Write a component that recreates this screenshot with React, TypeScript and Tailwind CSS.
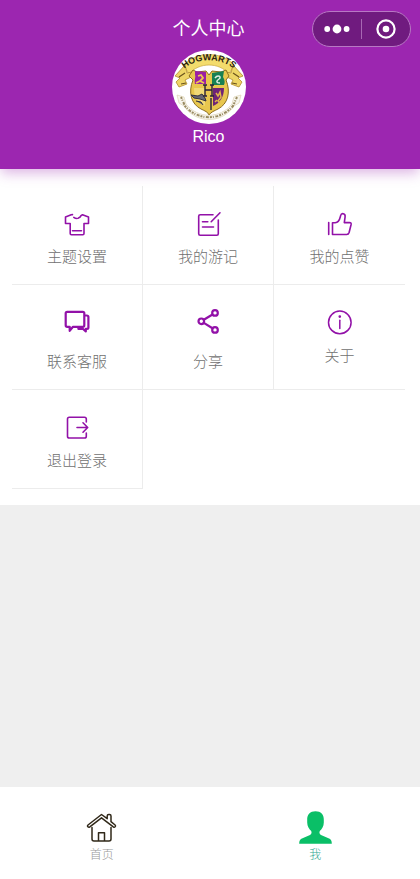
import type { ReactNode } from 'react';

interface MenuItem {
  label: string;
  icon: ReactNode;
  tall?: boolean;
}

function CrestAvatar(): ReactNode {
  return (
    <svg viewBox="0 0 74 74" className="size-[74px]" role="img" aria-label="Rico">
      <circle cx="37" cy="37" r="37" fill="#fff" />
      {/* top ribbon */}
      <path d="M12 15C24 1 50 1 62 15l-5 9C47 12 27 12 17 24z" fill="#f3dc6c" stroke="#c9a63a" strokeWidth=".7" />
      <path d="M13 15 3 26l5 2-4 4 3 5 8-3-2-4 6-3 1-5-5 1z" fill="#eed566" stroke="#b08c2c" strokeWidth=".8" />
      <path d="M61 15l10 11-5 2 4 4-3 5-8-3 2-4-6-3-1-5 5 1z" fill="#eed566" stroke="#b08c2c" strokeWidth=".8" />
      <path d="M7 27l6-4M9 34l5-1M67 27l-6-4M65 34l-5-1" stroke="#6b531c" strokeWidth="1.2" />
      <path id="crest-arc" d="M11 20C23 7 51 7 63 20" fill="none" />
      <text fontFamily="'Liberation Sans', sans-serif" fontWeight="700" fontSize="9" fill="#2b2310" textAnchor="middle">
        <textPath href="#crest-arc" startOffset="50%">HOGWARTS</textPath>
      </text>
      {/* shield */}
      <path d="M21 20l4 2 9-1 3 4 3-4 9 1 5-2 3 6-3 4c5 12 2 24-8 29-4 2-7 3-9 6-1-3-4-4-8-6-10-5-13-17-8-29l-4-4z" fill="#e8c74e" stroke="#8c6d1f" strokeWidth="1" />
      <path d="M23 21l11 1v12H23c-1-4 1-7 0-9z" fill="#9b1fa5" />
      <path d="M40 23l12-2-1 6c2 3 2 6 1 8H40z" fill="#178053" />
      <path d="M22 38h11v18c-8-3-11-9-11-18z" fill="#f0d976" />
      <path d="M41 38h11c0 9-4 15-11 18z" fill="#6e2377" />
      <path d="M26 26l3-1 2 3-3 3 4 2M24 33l4-2" fill="none" stroke="#edc650" strokeWidth="1.8" />
      <path d="M43 28c3-4 7-1 4 1s-3 4 1 4" fill="none" stroke="#e0eee4" strokeWidth="1.5" />
      <path d="M19 45l7 1 4-2 3 4 1 3-6-2-6-1zM24 51l5 1 2 3" fill="#686773" stroke="#34313e" strokeWidth="1" />
      <path d="M44 43l2 3 2-4 1 5-3 4 2 2M43 52l2-2" fill="none" stroke="#e2b848" strokeWidth="1.5" />
      <path d="M33 35v11M40 35v11M33 40h7M31 35h4M38 35h4M31 46h4M38 46h4M39 48v12" fill="none" stroke="#29213a" strokeWidth="1.4" />
      {/* motto ribbon */}
      <path d="M5 45l7 2 2 7c12 15 34 15 46 0l2-7 7-2-2 8-5 3C50 74 24 74 12 56l-5-3z" fill="#f7f5ee" stroke="#d8cda8" strokeWidth=".6" />
      <path d="M9 47l4 9c13 15 35 15 48 0l4-9" fill="none" stroke="#9a8c62" strokeWidth="2" strokeDasharray="2 1 1 1.5 3 1" />
    </svg>
  );
}

function LineIcon({ width = 1.6, children }: { width?: number; children: ReactNode }): ReactNode {
  return (
    <svg
      viewBox="0 0 28 28"
      className="size-7"
      fill="none"
      stroke="currentColor"
      strokeWidth={width}
      strokeLinecap="round"
      strokeLinejoin="round"
      aria-hidden="true"
    >
      {children}
    </svg>
  );
}

const menuItems: MenuItem[] = [
  {
    label: '主题设置',
    icon: (
      <LineIcon>
        <path d="M9.5 4.6 8.2 4.8 2.5 7v6.5h4.7v10q0 1.2 1.2 1.2h11.4q1.2 0 1.2-1.2v-10h4.5V7l-6-2.2-1.3.6q-1 2-2.8 2.7M10.8 7.4q1.4 1.1 3.2 1.1M9.5 20.8h9" />
      </LineIcon>
    ),
  },
  {
    label: '我的游记',
    icon: (
      <LineIcon>
        <path d="M19 4.7H6.2Q4.7 4.7 4.7 6.2v17.6q0 1.5 1.5 1.5h16.6q1.5 0 1.5-1.5V10M26 2.8l-8.8 8.9M8.5 11.7h5.3M8.5 17h11" />
      </LineIcon>
    ),
  },
  {
    label: '我的点赞',
    icon: (
      <LineIcon>
        <path d="M2.7 12.5v12M6.5 12.8h2.7c4.3-.4 4.6-4.1 5.4-7.2.8-3 5-2.5 4.5 1.3L18.3 12.6h5.2q2 0 1.6 1.9l-2 8q-.6 2-2.4 2H6.5z" />
      </LineIcon>
    ),
  },
  {
    label: '联系客服',
    tall: true,
    icon: (
      <LineIcon width={2.2}>
        <path d="M4.2 2.8h15.6q1.5 0 1.5 1.5v12q0 1.5-1.5 1.5H10l-3.3 4v-4H4.2q-1.5 0-1.5-1.5v-12q0-1.5 1.5-1.5z" />
        <path d="M22.5 6.5h1.3q1.6 0 1.6 1.6v10.3q0 1.4-1.4 1.4h-1.2v2.7l-3-2.7h-4.5" />
      </LineIcon>
    ),
  },
  {
    label: '分享',
    tall: true,
    icon: (
      <LineIcon width={2.2}>
        <circle cx="7.3" cy="12.3" r="2.8" />
        <circle cx="21" cy="3.9" r="2.8" />
        <circle cx="21" cy="20.9" r="2.8" />
        <path d="m9.8 10.8 8.7-5.3M9.8 13.9l8.7 5.4" />
      </LineIcon>
    ),
  },
  {
    label: '关于',
    icon: (
      <LineIcon width={1.5}>
        <circle cx="13.8" cy="13.4" r="11.3" />
        <path d="M13.8 11.2v8.3" />
        <circle cx="13.8" cy="7.6" r=".6" fill="currentColor" />
      </LineIcon>
    ),
  },
  {
    label: '退出登录',
    icon: (
      <LineIcon>
        <path d="M23.3 8V5q0-1.8-1.8-1.8H6.3Q4.5 3.2 4.5 5v17.2q0 1.8 1.8 1.8h15.2q1.8 0 1.8-1.8V19M14 13.5h10.5M20 8.8l4.7 4.7-4.7 4.7" />
      </LineIcon>
    ),
  },
];

function Capsule(): ReactNode {
  return (
    <div className="absolute top-[11px] right-[9px] flex h-9 w-[99px] items-center rounded-full border border-[#b878c4] bg-[#701b7f] text-white">
      <button type="button" aria-label="更多" className="flex h-full flex-1 items-center justify-center">
        <svg viewBox="0 0 26 10" className="h-[10px] w-[26px]" fill="currentColor">
          <circle cx="3.2" cy="5" r="2.9" />
          <circle cx="13" cy="5" r="4.4" />
          <circle cx="22.6" cy="5" r="2.9" />
        </svg>
      </button>
      <span className="h-5 w-px bg-[#a768b3]" />
      <button type="button" aria-label="关闭" className="flex h-full flex-1 items-center justify-center">
        <svg viewBox="0 0 20 20" className="size-5" fill="none" stroke="currentColor" strokeWidth="2.2">
          <circle cx="10" cy="10" r="8.6" />
          <circle cx="10" cy="10" r="3.3" fill="currentColor" stroke="none" />
        </svg>
      </button>
    </div>
  );
}

export default function App(): ReactNode {
  return (
    <div className="flex min-h-screen flex-col bg-[#efefef] font-['Liberation_Sans','Noto_Sans_CJK_SC',sans-serif]">
      <header className="relative z-10 flex flex-col items-center bg-[#9c26b0] pt-4 pr-[3px] pb-[19px] text-white shadow-[0_5px_12px_-1px_rgba(156,38,176,0.35)]">
        <h1 className="mb-2 text-lg leading-[26px]">个人中心</h1>
        <CrestAvatar />
        <p className="text-base leading-[26px]">Rico</p>
        <Capsule />
      </header>

      <main className="bg-white pt-[17px] pr-[15px] pb-4 pl-3">
        <div className="grid grid-cols-3">
          {menuItems.map((item, index) => (
            <button
              key={item.label}
              type="button"
              className={`flex flex-col items-center border-b border-[#ececec] pt-6 pb-4 text-[#9211a8] ${index % 3 === 2 ? '' : 'border-r'}`}
            >
              <span className={item.tall ? 'h-[34px]' : 'h-7'}>{item.icon}</span>
              <span className="mt-2 text-[15px] leading-[22px] font-light text-[#707070]">{item.label}</span>
            </button>
          ))}
        </div>
      </main>

      <nav className="mt-auto flex bg-white pt-6 pr-[3px] pb-4 text-xs leading-4 font-light">
        <a href="#home" className="flex flex-1 flex-col items-center gap-[3px] pr-[10px] text-[#999]">
          <svg
            viewBox="0 0 33 33"
            className="size-[33px]"
            fill="none"
            stroke="#302819"
            strokeWidth="1.5"
            strokeLinecap="round"
            strokeLinejoin="round"
            aria-hidden="true"
          >
            <path d="M7 16.5V28q0 2 2 2h15q2 0 2-2V16.500M13.500 30v-8.300h6V30" />
            <path d="M16.500 3.500 3 14q-1 1 0 1.800.8.700 1.800 0L16.500 6.800l11.800 9q1 .7 1.800 0 .9-.9 0-1.800L26 10.700V5q0-1.500-1.500-1.500h-.8Q22.200 3.500 22.200 5v2.700z" />
          </svg>
          首页
        </a>
        <a href="#me" aria-current="page" className="flex flex-1 flex-col items-center gap-[3px] text-[#2fa893]">
          <svg viewBox="0 0 33 33" className="size-[33px]" fill="#0abf67" aria-hidden="true">
            <path d="M16.500.3c5.300 0 8.500 3.400 8.300 8.500v2.800c0 4-2 6.700-4 8.400-.8 1.500-.2 3.300 1.200 4.100l7.500 3.200c2.500 1 3.300 2.300 3.300 5.400H.2c0-3.100.8-4.400 3.300-5.400l7.500-3.200c1.400-.8 2-2.600 1.200-4.100-2-1.700-4-4.400-4-8.400V8.800C8 3.700 11.200.3 16.500.3z" />
          </svg>
          我
        </a>
      </nav>
    </div>
  );
}
